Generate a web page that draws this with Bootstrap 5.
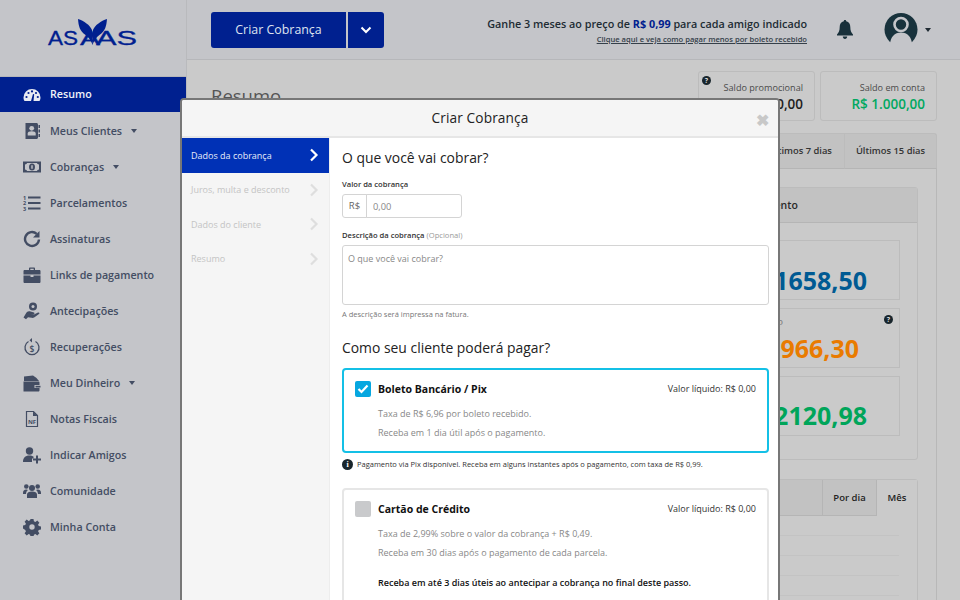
<!DOCTYPE html>
<html lang="pt-BR">
<head>
<meta charset="utf-8">
<title>Asaas</title>
<link rel="stylesheet" href="https://cdn.jsdelivr.net/npm/bootstrap@5.3.0/dist/css/bootstrap.min.css">
<style>
html,body{height:600px;overflow:hidden}
body{font-family:"Open Sans","Liberation Sans",sans-serif;background:#cacaca;color:#222;position:relative;width:960px}
.side{width:187px;height:600px;background:#c4c5c9;border-right:1px solid #b9babd;flex:none}
.brand{height:77px;border-bottom:1px solid #b5b6ba;padding-top:15px}
.side-item{height:36px;padding-left:23px;gap:9px;color:#434d63;font-size:10.7px;font-weight:600;text-decoration:none}
.side-item.on{background:#00208f;color:#f0f2f8;height:35px;margin-bottom:1px}
.side-ico{width:18px;height:18px;flex:none;fill:#434d63}
.on .side-ico{fill:#e8eaf2}
.tri{width:0;height:0;border-left:3.5px solid transparent;border-right:3.5px solid transparent;border-top:4px solid #434d63;margin-left:0}
.top{height:60px;background:#c4c5c9;border-bottom:1px solid #b6b7ba;padding-left:24px}
.mainbtn{background:#00208f;color:#dfe3ef;font-size:12.4px;height:36px;border-radius:3px;border:0;padding:0}
.mainbtn.lbl{width:135px;border-radius:3px 0 0 3px;padding-top:2px}
.mainbtn.arr{width:36px;border-radius:0 3px 3px 0;margin-left:2px}
.promo{margin-left:auto;margin-top:3px;text-align:right;line-height:1}
.promo1{font-size:10.8px;font-weight:600;color:#202b33}
.promo1 b{color:#00208f;font-weight:700}
.promo2{font-size:7.6px;font-weight:600;color:#35404a;text-decoration:underline;margin-top:6px;display:block}
.bell{margin-left:30px;fill:#18303a}
.avatar{margin-left:31px;margin-top:-2px}
.tri2{border-top-color:#202b33;margin:0 29px 0 7px}
.body-area{height:540px;position:relative;padding:11px 23px 0 24px}
.page-ttl{font-size:18.5px;color:#555;position:absolute;left:24px;top:24px;margin:0;line-height:24px}
.bal{height:50px;border:1px solid #bcbcbc;border-radius:3px;text-align:right;padding:11px 11px 0 0;position:relative;line-height:1}
.bal.one{width:117px;margin-left:auto}
.bal.two{width:117px;margin-left:5px}
.bal small{display:block;font-size:9.1px;color:#4a4a4a;font-weight:400}
.bal strong{display:block;font-size:13.5px;font-weight:600;margin-top:6px;color:#1e1e1e}
.bal .gr{color:#00a860}
.q{position:absolute;left:3px;top:4px;width:9px;height:9px;border-radius:50%;background:#18252c;color:#ddd;font-size:7px;font-weight:700;line-height:9px;text-align:center}
.tabs-row{margin-top:12px;height:36px;justify-content:flex-end}
.tabx{height:36px;border:1px solid #bcbcbc;border-bottom:1px solid #b5b5b5;background:#c2c2c2;font-size:9.4px;font-weight:600;color:#333;display:flex;align-items:center;justify-content:center;padding-top:1px}
.t7{width:90px}
.t15{width:93px;margin-left:-1px;border-radius:0 3px 0 0}
.outer{position:absolute;left:24px;right:23px;top:108px;bottom:-2px;border:1px solid #b8b8b8;border-top:0;padding:19px 18px 0 18px}
.pane{border:1px solid #bcbcbc;border-radius:3px}
.pane-h{height:35px;background:#c2c2c2;border-bottom:1px solid #b5b5b5;font-size:10.5px;font-weight:600;color:#2a2a2a;padding-left:500px;line-height:35px}
.pane-b{height:236px;padding:17px 17px 0 17px}
.stat{height:60px;border:1px solid #bcbcbc;margin-bottom:8px;position:relative;text-align:right}
.stat-l{font-size:9.5px;color:#777;height:22px;line-height:12px;padding:7px 116px 0 0}
.stat-n{font-size:25px;font-weight:700;line-height:34px;padding-right:32px}
.c-b{color:#005a93}.c-o{color:#e97b00}.c-g{color:#00a55a}
.c-o .stat-n{padding-right:40px}
.c-g .stat-n{margin-top:-1px}
.stat .q{left:auto;right:6px;top:6px}
.pane2{margin-top:19px;height:130px}
.pane2-h{height:36px;border-bottom:1px solid #b5b5b5;justify-content:flex-end;background:#c2c2c2}
.ptab{height:36px;font-size:9.5px;font-weight:600;color:#222;display:flex;align-items:center;justify-content:center}
.ptab.pd{width:54px;border-left:1px solid #b5b5b5}
.ptab.ms{width:41px;border-left:1px solid #b5b5b5;background:#cacaca}
.grid-l{height:20px;border-bottom:1px solid #c3c3c3;margin-right:18px}
.modalx{position:absolute;left:180px;top:98px;width:600px;height:510px;border:2px solid #777;border-radius:4px 4px 0 0;background:#fff;overflow:hidden;z-index:5}
.mh{height:38px;background:#f5f5f5;border-bottom:2px solid #e6e6e6;font-size:13.7px;font-weight:400;color:#222;position:relative;letter-spacing:.1px}
.closex{position:absolute;right:9px;top:12px;font-size:16px;font-weight:800;color:#c8c8c8;line-height:16px}
.mside{width:147px;background:#f5f5f5;flex:none;height:480px}
.mitem{height:34.5px;padding:0 10px 0 9px;font-size:9px;color:#c4c4c4}
.mitem.on{background:#0031b6;color:#e8ecf8}
.chev{margin-left:auto;fill:none;stroke:#dedede;stroke-width:2.2}
.on .chev{stroke:#fff}
.mmain{padding:0 9px 0 12px;flex:1;border-left:1px solid #ededed;min-width:0}
.h-sec{font-size:13.9px;font-weight:500;color:#222;line-height:20px;margin:0}
.sec-a{margin-top:10px}
.sec-b{margin:18px 0 10px}
.flabel{font-size:7.6px;font-weight:600;color:#333;line-height:11px;margin:11px 0 4px;display:block}
.flabel.lb2{margin-top:12px}
.flabel span{font-weight:400;color:#999}
.igrp{width:120px;height:24px;flex-wrap:nowrap}
.igrp .input-group-text{width:25px;padding:0;justify-content:center;font-size:9.5px;color:#666;background:#fff;border-color:#d4d4d4;border-radius:3px 0 0 3px}
.igrp .form-control{font-size:9.3px;padding:0 6px;border-color:#d4d4d4;border-radius:0 3px 3px 0;min-height:0;height:24px}
.igrp .form-control::placeholder,.tarea::placeholder{color:#888}
.tarea{height:60px;font-size:9px;padding:6px 5px;border:1px solid #d4d4d4;border-radius:3px;resize:none;box-shadow:none}
.hint{font-size:7.5px;color:#777;margin:4px 0 0;line-height:11px}
.paycard{border:2px solid #e6e6e6;border-radius:4px;padding:11px 11px 40px 11px}
.paycard.sel{border-color:#14c0e6;height:85px;padding-bottom:0}
.paycard.sec2{margin-top:18px}
.ck{width:16px;height:16px;border-radius:2px;background:#c9cacc;flex:none}
.sel .ck{background:#06a7e0}
.pay-t{font-size:10.5px;font-weight:700;color:#111;margin-left:7px;line-height:16px}
.pay-v{font-size:9px;color:#333;margin-left:auto}
.pay-d{font-size:9px;color:#888;margin:8px 0 0 23px;line-height:18.5px}
.pay-d p{margin:0}
.pay-d .bold{color:#111;font-weight:600;margin-top:12px}
.infor{font-size:7.5px;color:#333;line-height:11px;margin:6px 0 0 0;gap:4px}
.ibub{width:11px;height:11px;border-radius:50%;background:#18252c;color:#fff;font-family:"Liberation Serif",serif;font-size:8px;font-weight:700;line-height:11px;text-align:center;flex:none}
</style>
</head>
<body>
<div class="d-flex">
  <nav class="side">
    <div class="brand d-flex align-items-start justify-content-center">
      <svg width="100" height="34" viewBox="43 15 100 34">
        <text x="48" y="44.500" font-family="Liberation Sans" font-size="20" fill="#00208f" stroke="#00208f" stroke-width=".3" textLength="30" lengthAdjust="spacingAndGlyphs">AS</text>
        <text x="80" y="44.500" font-family="Liberation Sans" font-size="20" fill="#00208f" stroke="#00208f" stroke-width=".3" textLength="20" lengthAdjust="spacingAndGlyphs">A</text>
        <text x="96" y="44.500" font-family="Liberation Sans" font-size="20" fill="#00208f" stroke="#00208f" stroke-width=".3" textLength="41" lengthAdjust="spacingAndGlyphs">AS</text>
        <path d="M78 19c6 2 12 6 14 11 .6 3 .6 9 .6 15-2-5-4-8-7-10-6-4-7-9-7.600-16z" fill="#00208f"/>
        <path d="M107 19c-6 2-12 6-14 11-.6 3-.6 9-.6 15 2-5 4-8 7-10 6-4 7-9 7.600-16z" fill="#00208f"/>
      </svg>
    </div>
    <a class="side-item on d-flex align-items-center" href="#"><svg class="side-ico" viewBox="0 0 18 18"><path d="M9 3a8.500 8.500 0 0 0-8.500 8.500c0 1.500.4 2.700 1 3.500h15c.6-.8 1-2 1-3.500A8.500 8.500 0 0 0 9 3z"/><g fill="#00208f"><circle cx="3.500" cy="11" r="1.100"/><circle cx="5.500" cy="7" r="1.100"/><circle cx="9" cy="5.400" r="1.100"/><circle cx="13" cy="7" r="1.100"/><circle cx="14.800" cy="11" r="1.100"/><path d="M8 15l2-7 1.200.3L10.500 15z"/></g></svg>Resumo</a>
    <a class="side-item d-flex align-items-center" href="#"><svg class="side-ico" viewBox="0 0 18 18"><path d="M2.500 1h11c.8 0 1.500.7 1.500 1.500v13c0 .8-.7 1.500-1.500 1.500h-11z"/><path d="M15.500 3H17v3h-1.500zM15.500 7.500H17v3h-1.500zM15.500 12H17v3h-1.500z"/><g fill="#c4c5c9"><circle cx="8.700" cy="6.300" r="2.400"/><path d="M4.700 13.500V11.500c0-1.500 1.500-2.300 4-2.300s4 .8 4 2.300v2z"/></g></svg>Meus Clientes<span class="tri"></span></a>
    <a class="side-item d-flex align-items-center" href="#"><svg class="side-ico" viewBox="0 0 18 18"><path d="M0 3.500h18v11H0z"/><path d="M2 6.500c1 0 2-1 2-1.500h10c0 .5 1 1.500 2 1.500v5c-1 0-2 1-2 1.500H4c0-.5-1-1.500-2-1.500z" fill="#c4c5c9"/><ellipse cx="9" cy="9" rx="3" ry="3.500"/><path d="M8.300 7.300h1.400v3.400H8.300z" fill="#c4c5c9"/></svg>Cobranças<span class="tri"></span></a>
    <a class="side-item d-flex align-items-center" href="#"><svg class="side-ico" viewBox="0 0 18 18"><path d="M5 2.500h12.500v2H5zM5 8h12.500v2H5zM5 13.500h12.500v2H5z"/><text x="0" y="5.500" font-size="5.500" font-weight="700" font-family="Open Sans">1</text><text x="0" y="11" font-size="5.500" font-weight="700" font-family="Open Sans">2</text><text x="0" y="16.500" font-size="5.500" font-weight="700" font-family="Open Sans">3</text></svg>Parcelamentos</a>
    <a class="side-item d-flex align-items-center" href="#"><svg class="side-ico" viewBox="0 0 18 18"><path d="M16 9.500A7 7 0 1 1 13.700 3.800" fill="none" stroke="#434d63" stroke-width="2.400"/><path d="M16.500 1v6.500H10z"/></svg>Assinaturas</a>
    <a class="side-item d-flex align-items-center" href="#"><svg class="side-ico" viewBox="0 0 18 18"><path d="M6 4V2.500C6 1.800 6.500 1.500 7 1.500h4c.5 0 1 .3 1 1V4h4.500c.5 0 1 .5 1 1v3.500H.5V5c0-.5.5-1 1-1zm1.300 0h3.400V2.800H7.300zM.5 9.500h7V11h3V9.500h7V16c0 .5-.5 1-1 1h-15c-.5 0-1-.5-1-1z"/></svg>Links de pagamento</a>
    <a class="side-item d-flex align-items-center" href="#"><svg class="side-ico" viewBox="0 0 18 18"><circle cx="10" cy="4.500" r="4"/><circle cx="10" cy="4.500" r="1.500" fill="#c4c5c9"/><path d="M.5 15.500l3-5c1-1 2.500-1.500 4-1l3.500 1c1 .5.5 2-.8 1.800L7.500 12l3.500.5 4-2c1.200-.5 2 .8 1 1.500l-4.500 3.300c-1 .6-2 .7-3 .5l-3.500-.5-2 2z"/></svg>Antecipações</a>
    <a class="side-item d-flex align-items-center" href="#"><svg class="side-ico" viewBox="0 0 18 18"><path d="M5.500 3.500A7 7 0 1 0 12.500 3.500" fill="none" stroke="#434d63" stroke-width="1.300"/><path d="M9 0v4.500L6.500 2.200z"/><text x="9" y="13.500" text-anchor="middle" font-size="8.500" font-weight="600" font-family="Open Sans">$</text></svg>Recuperações</a>
    <a class="side-item d-flex align-items-center" href="#"><svg class="side-ico" viewBox="0 0 18 18"><path d="M1 7V2.500l9-1 3.500 2.500 2.500 3z"/><path d="M.5 7.500h15c.5 0 1 .5 1 1V11h-5v3h5v2.500c0 .5-.5 1-1 1H.5z"/><path d="M12.500 11.800h5v1.700h-5z"/></svg>Meu Dinheiro<span class="tri"></span></a>
    <a class="side-item d-flex align-items-center" href="#"><svg class="side-ico" viewBox="0 0 18 18"><path d="M3.500 1.500h7l4 4v11h-11z" fill="none" stroke="#434d63" stroke-width="1.200"/><path d="M10 1.500v4.500h4.500z"/><text x="9" y="14" text-anchor="middle" font-size="6" font-weight="700" font-family="Open Sans">NF</text></svg>Notas Fiscais</a>
    <a class="side-item d-flex align-items-center" href="#"><svg class="side-ico" viewBox="0 0 18 18"><circle cx="6.500" cy="5" r="3.700"/><path d="M0 16c0-4 2-6.500 6.500-6.500 1.500 0 3 .5 4 1v2H9V16z"/><path d="M13 9.500h2v3h3v2h-3v3h-2v-3h-3v-2h3z"/></svg>Indicar Amigos</a>
    <a class="side-item d-flex align-items-center" href="#"><svg class="side-ico" viewBox="0 0 18 18"><circle cx="9" cy="6" r="3"/><circle cx="3.300" cy="4.500" r="2.300"/><circle cx="14.700" cy="4.500" r="2.300"/><path d="M4 16v-3.500C4 10.500 6 9.500 9 9.500s5 1 5 3V16z"/><path d="M0 11c0-2 1-3.500 3.300-3.500.7 0 1.300.2 1.700.5-1.300 1-2 2.500-2 4H0zM18 11c0-2-1-3.500-3.300-3.500-.7 0-1.300.2-1.700.5 1.300 1 2 2.500 2 4h3z"/></svg>Comunidade</a>
    <a class="side-item d-flex align-items-center" href="#"><svg class="side-ico" viewBox="0 0 18 18"><path fill-rule="evenodd" d="M7.500 1h3l.4 2.300 1.500.6 1.900-1.300 2.100 2.100-1.300 1.900.6 1.500 2.300.4v3l-2.300.4-.6 1.500 1.300 1.900-2.100 2.100-1.900-1.300-1.500.6-.4 2.300h-3l-.4-2.300-1.500-.6-1.900 1.300-2.100-2.100 1.300-1.900-.6-1.500L0 10.500v-3l2.300-.4.6-1.500L1.600 3.700l2.100-2.100 1.900 1.300 1.500-.6zM9 6.300a2.700 2.700 0 1 0 0 5.400 2.700 2.700 0 0 0 0-5.400z"/></svg>Minha Conta</a>
  </nav>
  <div class="flex-grow-1">
    <header class="top d-flex align-items-center">
      <button class="mainbtn lbl">Criar Cobrança</button>
      <button class="mainbtn arr d-flex align-items-center justify-content-center"><svg width="12" height="8" viewBox="0 0 12 8"><path d="M1.500 1.500L6 6l4.500-4.500" fill="none" stroke="#fff" stroke-width="2"/></svg></button>
      <div class="promo">
        <div class="promo1">Ganhe 3 meses ao preço de <b>R$ 0,99</b> para cada amigo indicado</div>
        <a class="promo2" href="#">Clique aqui e veja como pagar menos por boleto recebido</a>
      </div>
      <svg class="bell" width="16" height="20" viewBox="0 0 16 20"><path d="M8 0c.8 0 1.200.5 1.200 1.300C12 2 13.300 4.200 13.300 7c0 4 1 5.500 2.700 7.500v1H0v-1C1.700 12.500 2.700 11 2.700 7c0-2.800 1.300-5 4.100-5.700C6.800.5 7.200 0 8 0zM5.800 16.500h4.400C10.200 18 9.200 19 8 19s-2.200-1-2.200-2.500z"/></svg>
      <svg class="avatar" width="34" height="31" viewBox="0 0 34 31"><defs><clipPath id="avc"><path d="M0 0h34v31H0z"/></clipPath></defs><g clip-path="url(#avc)"><circle cx="17" cy="16.500" r="16.500" fill="#18323c"/><circle cx="17" cy="11.500" r="6.500" fill="#18323c" stroke="#c4c5c9" stroke-width="2.600"/><path d="M6 31c.5-7 4.500-11.500 11-11.500S27.500 24 28 31z" fill="#c4c5c9"/></g></svg>
      <span class="tri tri2"></span>
    </header>
    <main class="body-area">
      <h1 class="page-ttl">Resumo</h1>
      <div class="d-flex">
        <div class="bal one"><span class="q">?</span><small>Saldo promocional</small><strong>R$ 0,00</strong></div>
        <div class="bal two"><small>Saldo em conta</small><strong class="gr">R$ 1.000,00</strong></div>
      </div>
      <div class="tabs-row d-flex">
        <div class="tabx t7">Últimos 7 dias</div>
        <div class="tabx t15">Últimos 15 dias</div>
      </div>
      <div class="outer">
        <section class="pane">
          <div class="pane-h">Recebimento</div>
          <div class="pane-b">
            <div class="stat c-b"><div class="stat-l">&nbsp;</div><div class="stat-n">R$ 1658,50</div></div>
            <div class="stat c-o"><span class="q">?</span><div class="stat-l">Previsto</div><div class="stat-n">R$ 966,30</div></div>
            <div class="stat c-g"><div class="stat-l">&nbsp;</div><div class="stat-n">R$ 2120,98</div></div>
          </div>
        </section>
        <section class="pane pane2">
          <div class="pane2-h d-flex">
            <div class="ptab pd">Por dia</div>
            <div class="ptab ms">Mês</div>
          </div>
          <div class="grid-l"></div><div class="grid-l"></div><div class="grid-l"></div><div class="grid-l"></div>
        </section>
      </div>
    </main>
  </div>
</div>

<div class="modalx" role="dialog">
  <div class="mh d-flex align-items-center justify-content-center">Criar Cobrança<span class="closex">✖</span></div>
  <div class="d-flex">
    <div class="mside">
      <div class="mitem on d-flex align-items-center">Dados da cobrança<svg class="chev" width="10" height="14" viewBox="0 0 10 14"><path d="M2 1.500L7.500 7 2 12.500"/></svg></div>
      <div class="mitem d-flex align-items-center">Juros, multa e desconto<svg class="chev" width="10" height="14" viewBox="0 0 10 14"><path d="M2 1.500L7.500 7 2 12.500"/></svg></div>
      <div class="mitem d-flex align-items-center">Dados do cliente<svg class="chev" width="10" height="14" viewBox="0 0 10 14"><path d="M2 1.500L7.500 7 2 12.500"/></svg></div>
      <div class="mitem d-flex align-items-center">Resumo<svg class="chev" width="10" height="14" viewBox="0 0 10 14"><path d="M2 1.500L7.500 7 2 12.500"/></svg></div>
    </div>
    <div class="mmain">
      <h2 class="h-sec sec-a">O que você vai cobrar?</h2>
      <label class="flabel">Valor da cobrança</label>
      <div class="input-group igrp">
        <span class="input-group-text">R$</span>
        <input class="form-control" placeholder="0,00">
      </div>
      <label class="flabel lb2">Descrição da cobrança <span>(Opcional)</span></label>
      <textarea class="form-control tarea" placeholder="O que você vai cobrar?"></textarea>
      <p class="hint">A descrição será impressa na fatura.</p>
      <h2 class="h-sec sec-b">Como seu cliente poderá pagar?</h2>
      <div class="paycard sel">
        <div class="d-flex align-items-center"><span class="ck d-flex align-items-center justify-content-center"><svg width="12" height="10" viewBox="0 0 12 10"><path d="M1.500 5l3 3 6-6.500" fill="none" stroke="#fff" stroke-width="2.200"/></svg></span><span class="pay-t">Boleto Bancário / Pix</span><span class="pay-v">Valor líquido: R$ 0,00</span></div>
        <div class="pay-d"><p>Taxa de R$ 6,96 por boleto recebido.</p><p>Receba em 1 dia útil após o pagamento.</p></div>
      </div>
      <div class="infor d-flex align-items-center"><span class="ibub">i</span>Pagamento via Pix disponível. Receba em alguns instantes após o pagamento, com taxa de R$ 0,99.</div>
      <div class="paycard sec2">
        <div class="d-flex align-items-center"><span class="ck"></span><span class="pay-t">Cartão de Crédito</span><span class="pay-v">Valor líquido: R$ 0,00</span></div>
        <div class="pay-d"><p>Taxa de 2,99% sobre o valor da cobrança + R$ 0,49.</p><p>Receba em 30 dias após o pagamento de cada parcela.</p><p class="bold">Receba em até 3 dias úteis ao antecipar a cobrança no final deste passo.</p></div>
      </div>
    </div>
  </div>
</div>
<script src="https://cdn.jsdelivr.net/npm/bootstrap@5.3.0/dist/js/bootstrap.bundle.min.js"></script>
</body>
</html>
